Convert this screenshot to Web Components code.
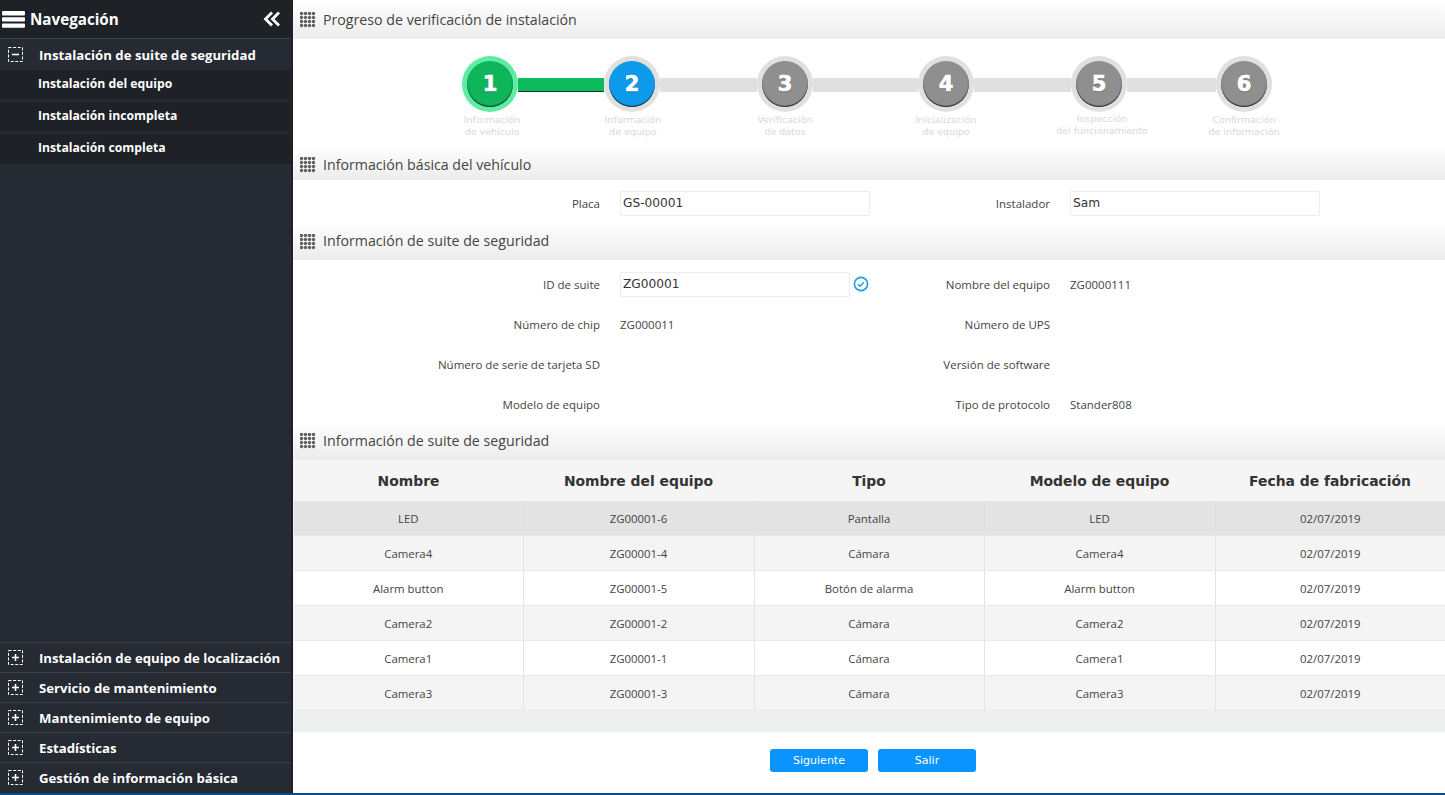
<!DOCTYPE html>
<html lang="es">
<head>
<meta charset="utf-8">
<title>Instalación</title>
<style>
  html, body { margin: 0; height: 100%; overflow: hidden; }
  body { background: #0e4a80; font-family: "Open Sans", "Noto Sans", sans-serif; color: #333; }
</style>
</head>
<body>
<app-shell>
  <nav-sidebar slot="side">
    <nav-group slot="top" open label="Instalación de suite de seguridad">
      <nav-link>Instalación del equipo</nav-link>
      <nav-link>Instalación incompleta</nav-link>
      <nav-link>Instalación completa</nav-link>
    </nav-group>
    <nav-group slot="bottom" label="Instalación de equipo de localización"></nav-group>
    <nav-group slot="bottom" label="Servicio de mantenimiento"></nav-group>
    <nav-group slot="bottom" label="Mantenimiento de equipo"></nav-group>
    <nav-group slot="bottom" label="Estadísticas"></nav-group>
    <nav-group slot="bottom" label="Gestión de información básica"></nav-group>
  </nav-sidebar>

  <section-title style="height:39px">Progreso de verificación de instalación</section-title>
  <step-bar>
    <step-item state="done" num="1" style="--shift:2px">Información<br>de vehículo</step-item>
    <step-line state="done" style="width:86px"></step-line>
    <step-item state="active" num="2" style="--shift:1px">Información<br>de equipo</step-item>
    <step-line style="width:97px"></step-line>
    <step-item num="3">Verificación<br>de datos</step-item>
    <step-line style="width:105px"></step-line>
    <step-item num="4">Inicialización<br>de equipo</step-item>
    <step-line style="width:97px"></step-line>
    <step-item num="5" style="--shift:3px;--lift:1px">Inspección<br>del funcionamiento</step-item>
    <step-line style="width:89px"></step-line>
    <step-item num="6">Confirmación<br>de información</step-item>
  </step-bar>

  <section-title style="height:35px">Información básica del vehículo</section-title>
  <form-grid style="height:42px;padding-top:7px">
    <form-field label="Placa"><text-box>GS-00001</text-box></form-field>
    <form-field label="Instalador" second><text-box>Sam</text-box></form-field>
  </form-grid>

  <section-title style="height:38px;line-height:38px">Información de suite de seguridad</section-title>
  <form-grid style="height:161px;padding-top:8px">
    <form-field label="ID de suite"><text-box checked>ZG00001</text-box></form-field>
    <form-field label="Nombre del equipo" second>ZG0000111</form-field>
    <form-field label="Número de chip">ZG000011</form-field>
    <form-field label="Número de UPS" second></form-field>
    <form-field label="Número de serie de tarjeta SD"></form-field>
    <form-field label="Versión de software" second></form-field>
    <form-field label="Modelo de equipo"></form-field>
    <form-field label="Tipo de protocolo" second>Stander808</form-field>
  </form-grid>

  <section-title style="height:39px">Información de suite de seguridad</section-title>
  <suite-table></suite-table>
  <button-row>
    <action-button>Siguiente</action-button>
    <action-button>Salir</action-button>
  </button-row>
</app-shell>

<script>
/* shell */
class AppShell extends HTMLElement {
	constructor() {
		super();
		this.attachShadow({ mode: 'open' }).innerHTML = `
		<style>
			:host { display: flex; height: 793px; background: #fff; }
			.side { display: block; width: 293px; flex: none; }
			main { flex: 1; min-width: 0; display: flex; flex-direction: column; }
		</style>
		<div class="side"><slot name="side"></slot></div>
		<main><slot></slot></main>`;
	}
}
customElements.define('app-shell', AppShell);

/* sidebar */
class NavSidebar extends HTMLElement {
	constructor() {
		super();
		this.attachShadow({ mode: 'open' }).innerHTML = `
		<style>
			:host { display: flex; flex-direction: column; height: 793px; box-sizing: border-box; background: #252a33; border-right: 2px solid #1e2126; font-family: "Open Sans", sans-serif; color: #fff; }
			header { display: flex; align-items: center; height: 39px; flex: none; background: #1e2126; box-sizing: border-box; padding: 0 10px 0 2px; border-bottom: 1px solid #3b3f4e; }
			header b { margin-left: 5px; font-size: 15.2px; font-weight: 700; flex: 1; }
			.top { flex: 1; }
			.bottom { padding-bottom: 1px; }
		</style>
		<header>
			<svg width="23" height="17" viewBox="0 0 23 17" fill="#fff"><rect y="0" width="23" height="4.4" rx="1"/><rect y="6.2" width="23" height="4.4" rx="1"/><rect y="12.4" width="23" height="4.4" rx="1"/></svg>
			<b>Navegación</b>
			<svg width="18" height="16" viewBox="0 0 18 16" fill="none" stroke="#fff" stroke-width="2.8"><path d="M9 1.5 2.5 8 9 14.5M16 1.5 9.5 8 16 14.5"/></svg>
		</header>
		<div class="top"><slot name="top"></slot></div>
		<div class="bottom"><slot name="bottom"></slot></div>`;
	}
}
customElements.define('nav-sidebar', NavSidebar);

class NavGroup extends HTMLElement {
	constructor() {
		super();
		const open = this.hasAttribute('open');
		this.attachShadow({ mode: 'open' }).innerHTML = `
		<style>
			:host { display: block; }
			.head { display: flex; align-items: center; height: ${open ? 31 : 30}px; box-sizing: border-box; padding-left: 8px; border-top: ${open ? 0 : 1}px solid #3b3f4e; font-size: 13.2px; font-weight: 700; white-space: nowrap; }
			svg { flex: none; margin-right: 16px; }
		</style>
		<div class="head">
			<svg width="15" height="15" viewBox="0 0 15 15" fill="none" stroke="#fff">
				<rect x=".5" y=".5" width="14" height="14" stroke-dasharray="3 1.6" stroke-width="1"/>
				<path d="M4 7.5h7${open ? '' : 'M7.5 4v7'}" stroke-width="1.6"/>
			</svg>
			<span>${this.getAttribute('label')}</span>
		</div>
		<slot></slot>`;
	}
}
customElements.define('nav-group', NavGroup);

class NavLink extends HTMLElement {
	constructor() {
		super();
		this.attachShadow({ mode: 'open' }).innerHTML = `
		<style>
			:host { display: flex; align-items: center; box-sizing: border-box; height: 30px; margin-bottom: 2px; padding: 0 0 3px 38px; background: #1e2126; font-size: 12.2px; font-weight: 700; }
		</style>
		<slot></slot>`;
	}
}
customElements.define('nav-link', NavLink);

/* section heading */
class SectionTitle extends HTMLElement {
	constructor() {
		super();
		this.attachShadow({ mode: 'open' }).innerHTML = `
		<style>
			:host { display: flex; flex: none; box-sizing: border-box; padding-left: 7px; background: linear-gradient(#fff, #ececec); font-size: 14.2px; color: #444; line-height: 40px; overflow: hidden; }
			svg { margin: 12px 7px 0 0; flex: none; }
		</style>
		<svg width="16" height="16" viewBox="0 0 16 16" fill="#606060">
			${[1.5, 5.5, 9.5, 13.5].map(y => [1.5, 5.5, 9.5, 13.5].map(x => `<circle cx="${x}" cy="${y}" r="1.7"/>`).join('')).join('')}
		</svg>
		<span><slot></slot></span>`;
	}
}
customElements.define('section-title', SectionTitle);

/* stepper */
class StepBar extends HTMLElement {
	constructor() {
		super();
		this.attachShadow({ mode: 'open' }).innerHTML = `
		<style>
			:host { display: flex; flex: none; height: 106px; box-sizing: border-box; padding: 17px 0 0 169px; }
		</style>
		<slot></slot>`;
	}
}
customElements.define('step-bar', StepBar);

class StepItem extends HTMLElement {
	constructor() {
		super();
		const state = this.getAttribute('state');
		const ring = state === 'done' ? '#5ceca3' : '#e0e0e0';
		const fill = state === 'done' ? '#0fb55a' : state === 'active' ? '#0e9aea' : '#8f8f8f';
		this.attachShadow({ mode: 'open' }).innerHTML = `
		<style>
			:host { display: flex; flex-direction: column; align-items: center; width: 56px; flex: none; position: relative; z-index: 1; }
			.ring { box-sizing: border-box; width: 56px; height: 56px; border-radius: 50%; padding: 5px; background: ${ring}; }
			.dot { height: 46px; border-radius: 50%; background: ${fill}; box-shadow: inset 0 -1px 1px #222; display: flex; align-items: center; justify-content: center; color: #fff; font: 700 21px "DejaVu Sans", sans-serif; -webkit-text-stroke: .7px #fff; text-shadow: 0 1px 1px rgba(0,0,0,.35); }
			.text { margin: calc(2px - var(--lift, 0px)) 0 0 calc(var(--shift, 0px) * 2); font: 9.5px/12px "DejaVu Sans", sans-serif; color: #d8d8d8; text-align: center; white-space: nowrap; }
		</style>
		<div class="ring"><div class="dot">${this.getAttribute('num')}</div></div>
		<div class="text"><slot></slot></div>`;
	}
}
customElements.define('step-item', StepItem);

class StepLine extends HTMLElement {
	constructor() {
		super();
		const done = this.getAttribute('state') === 'done';
		this.attachShadow({ mode: 'open' }).innerHTML = `
		<style>
			:host { display: block; flex: none; height: 14px; margin-top: 22px; box-sizing: border-box; background: ${done ? '#0cbc5c' : '#e0e0e0'}; ${done ? 'border-bottom: 1px solid #1a3a2a;' : ''} }
		</style>`;
	}
}
customElements.define('step-line', StepLine);

/* forms */
class FormGrid extends HTMLElement {
	constructor() {
		super();
		this.attachShadow({ mode: 'open' }).innerHTML = `
		<style>
			:host { display: grid; flex: none; box-sizing: border-box; grid-template-columns: 607px 1fr; grid-auto-rows: 32px; row-gap: 8px; align-items: center; }
		</style>
		<slot></slot>`;
	}
}
customElements.define('form-grid', FormGrid);

class FormField extends HTMLElement {
	constructor() {
		super();
		const width = this.hasAttribute('second') ? 150 : 307;
		this.attachShadow({ mode: 'open' }).innerHTML = `
		<style>
			:host { display: flex; align-items: center; font-size: 11.5px; color: #444; }
			label { flex: none; width: ${width}px; margin-right: 20px; text-align: right; white-space: nowrap; }
		</style>
		<label>${this.getAttribute('label')}</label>
		<slot></slot>`;
	}
}
customElements.define('form-field', FormField);

class TextBox extends HTMLElement {
	constructor() {
		super();
		const checked = this.hasAttribute('checked');
		this.attachShadow({ mode: 'open' }).innerHTML = `
		<style>
			:host { display: flex; align-items: center; }
			.box { box-sizing: border-box; width: ${checked ? 230 : 250}px; height: 25px; padding: 0 2px; border: 1px solid #ececec; border-radius: 2px; font: 12.2px/23px "DejaVu Sans", sans-serif; color: #333; background: #fff; }
			svg { margin-left: 3px; }
		</style>
		<div class="box"><slot></slot></div>
		${checked ? `<svg width="16" height="16" viewBox="0 0 16 16" fill="none" stroke="#1e9be8"><circle cx="8" cy="8" r="6.6" stroke-width="1.6"/><path d="M5 8.2 7.2 10.3 11 6.3" stroke-width="1.4"/></svg>` : ''}`;
	}
}
customElements.define('text-box', TextBox);

/* table */
const suiteHead = ['Nombre', 'Nombre del equipo', 'Tipo', 'Modelo de equipo', 'Fecha de fabricación'];
const suiteRows = [
	['LED', 'ZG00001-6', 'Pantalla', 'LED', '02/07/2019'],
	['Camera4', 'ZG00001-4', 'Cámara', 'Camera4', '02/07/2019'],
	['Alarm button', 'ZG00001-5', 'Botón de alarma', 'Alarm button', '02/07/2019'],
	['Camera2', 'ZG00001-2', 'Cámara', 'Camera2', '02/07/2019'],
	['Camera1', 'ZG00001-1', 'Cámara', 'Camera1', '02/07/2019'],
	['Camera3', 'ZG00001-3', 'Cámara', 'Camera3', '02/07/2019'],
];
class SuiteTable extends HTMLElement {
	constructor() {
		super();
		const rows = suiteRows.map((row, i) => `<tr class="${i === 0 ? 'sel' : i % 2 ? 'odd' : ''}">${row.map(c => `<td>${c}</td>`).join('')}</tr>`).join('');
		this.attachShadow({ mode: 'open' }).innerHTML = `
		<style>
			:host { display: block; flex: none; height: 272px; background: #eeeff1; padding-left: 1px; }
			table { width: 100%; table-layout: fixed; border-collapse: collapse; background: #fff; }
			th { height: 41px; padding: 0; background: #f5f5f5; font: 700 13.9px "DejaVu Sans", sans-serif; color: #333; }
			td { height: 34px; padding: 0; text-align: center; font-size: 11.4px; color: #444; border-left: 1px solid #e4e4e4; border-bottom: 1px solid #e9e9e9; }
			td:first-child { border-left: 0; }
			.odd td { background: #f4f4f4; }
			.sel td { background: #e3e3e3; border-left-color: #e0e0e0; }
		</style>
		<table>
			<colgroup><col style="width:229px"><col style="width:231px"><col style="width:230px"><col style="width:231px"><col></colgroup>
			<thead><tr>${suiteHead.map(h => `<th>${h}</th>`).join('')}</tr></thead>
			<tbody>${rows}</tbody>
		</table>`;
	}
}
customElements.define('suite-table', SuiteTable);

/* buttons */
class ButtonRow extends HTMLElement {
	constructor() {
		super();
		this.attachShadow({ mode: 'open' }).innerHTML = `
		<style>
			:host { display: flex; justify-content: flex-start; gap: 10px; padding: 17px 0 0 477px; }
		</style>
		<slot></slot>`;
	}
}
customElements.define('button-row', ButtonRow);

class ActionButton extends HTMLElement {
	constructor() {
		super();
		this.attachShadow({ mode: 'open' }).innerHTML = `
		<style>
			:host { display: flex; align-items: center; justify-content: center; width: 98px; height: 23px; border-radius: 3px; background: #0a94ff; color: #fff; font: 11px "DejaVu Sans", sans-serif; }
		</style>
		<slot></slot>`;
	}
}
customElements.define('action-button', ActionButton);
</script>
</body>
</html>
